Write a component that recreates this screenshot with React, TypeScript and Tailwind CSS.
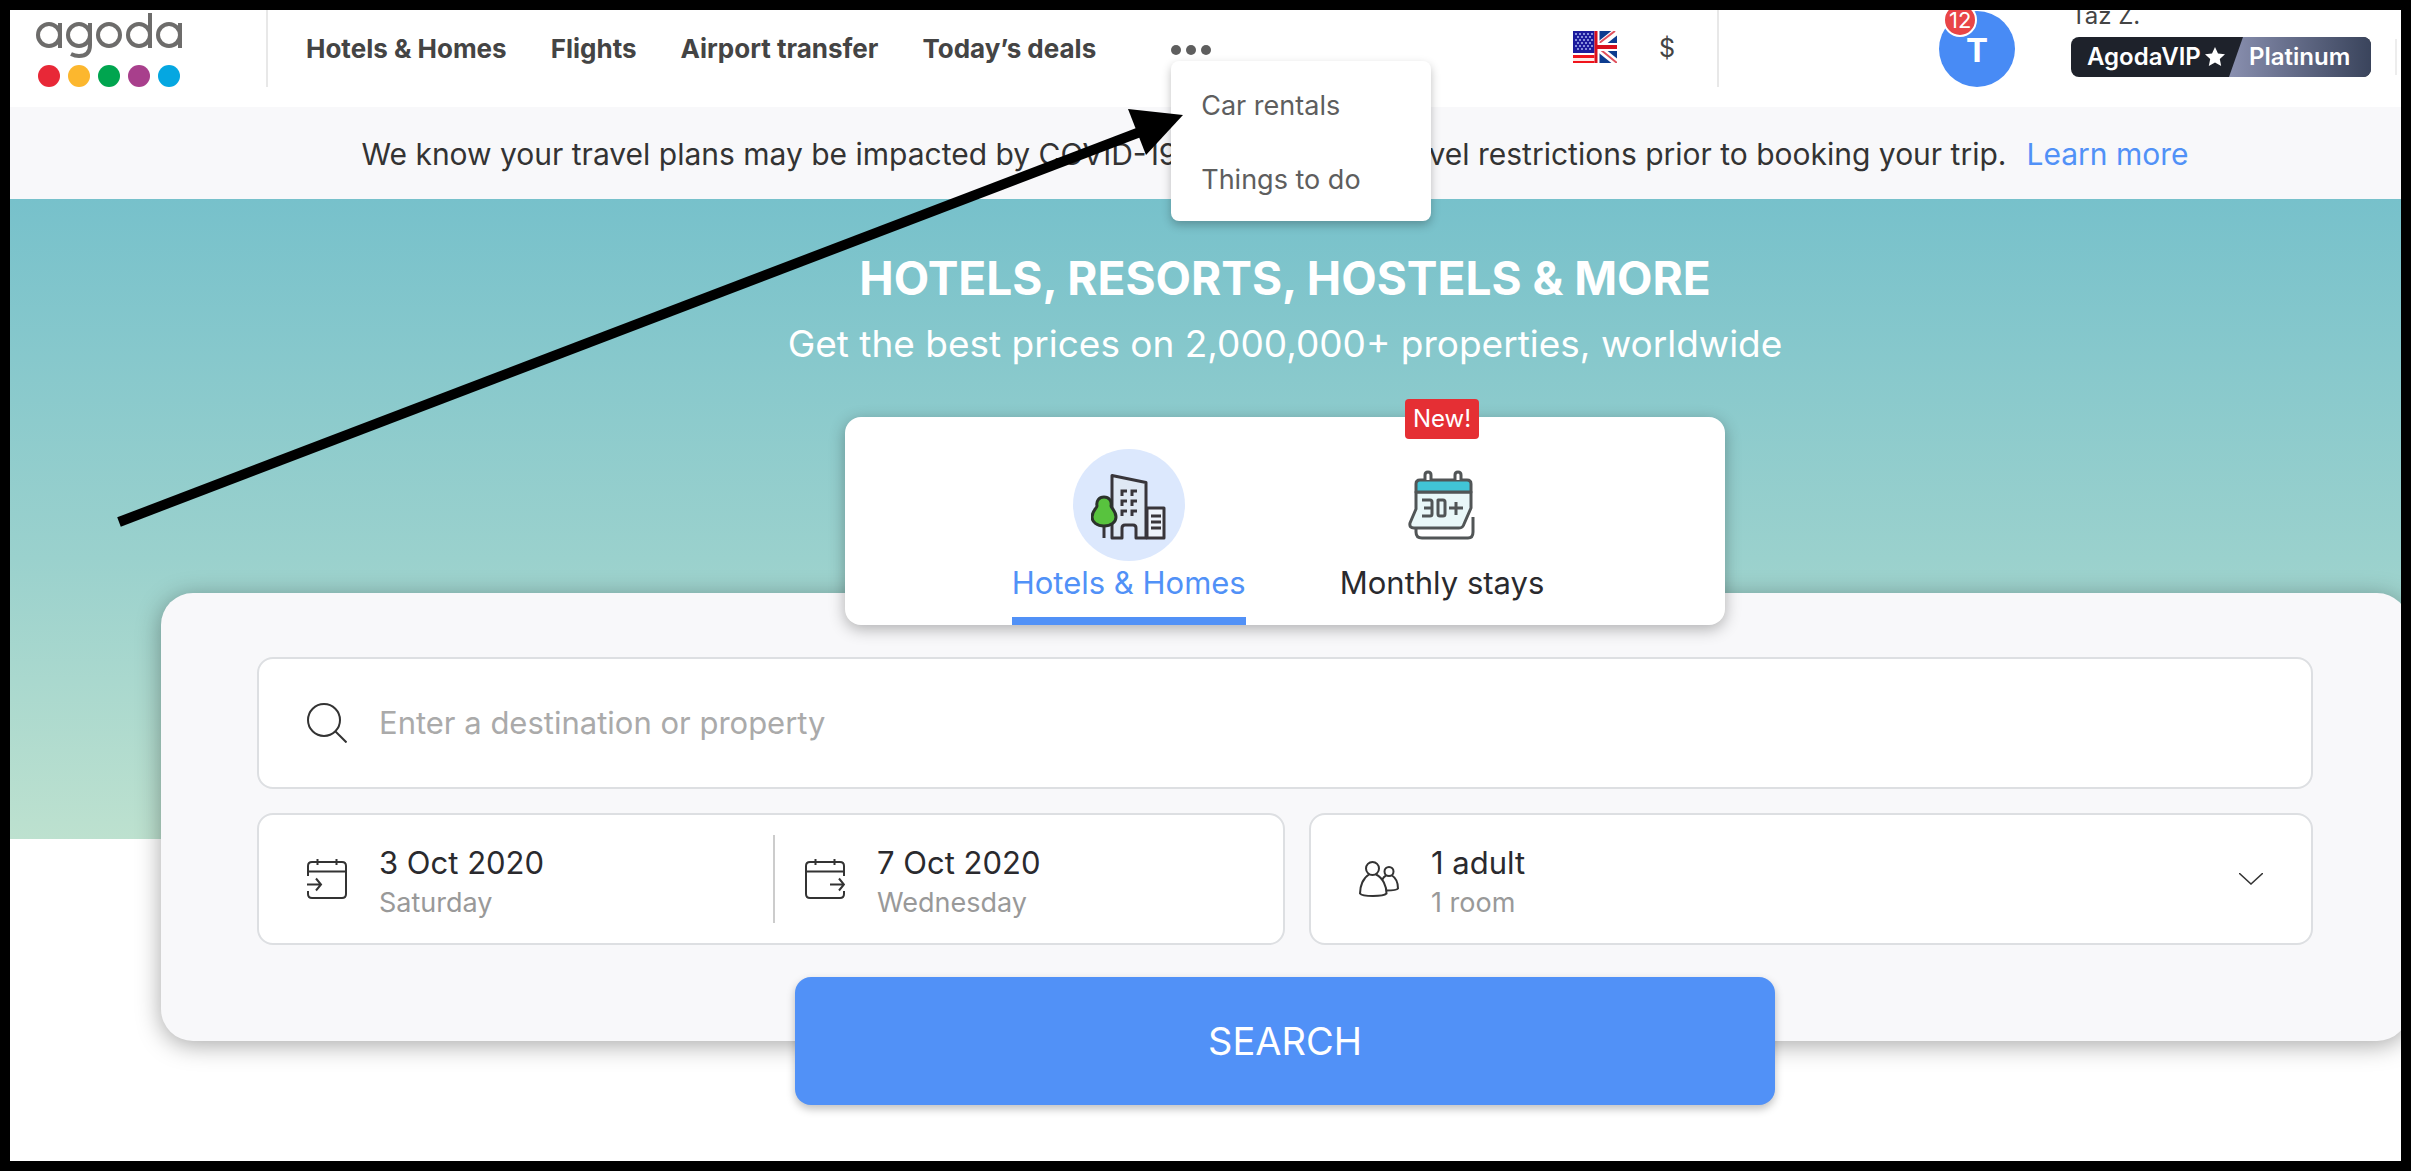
import type { ReactNode } from "react"

const navItems = ["Hotels & Homes", "Flights", "Airport transfer", "Today’s deals"]
const moreItems = ["Car rentals", "Things to do"]

function Logo() {
  return (
    <svg viewBox="0 0 148 76" className="h-[76px] w-[148px]" role="img" aria-label="agoda">
      <g fill="none" stroke="#6d6c6b" strokeWidth="4">
        <circle cx="13" cy="24" r="11" />
        <path d="M24 12v25" />
        <circle cx="43" cy="24" r="11" />
        <path d="M54 12v22c0 8-4 11-11 11-3 0-6-1-8-2" />
        <circle cx="73" cy="24" r="11" />
        <circle cx="103" cy="24" r="11" />
        <path d="M114 2v35" />
        <circle cx="133" cy="24" r="11" />
        <path d="M144 12v25" />
      </g>
      <circle cx="13" cy="65" r="11" fill="#e82837" />
      <circle cx="43" cy="65" r="11" fill="#fcb72e" />
      <circle cx="73" cy="65" r="11" fill="#00a54f" />
      <circle cx="103" cy="65" r="11" fill="#a83f8c" />
      <circle cx="133" cy="65" r="11" fill="#05a7e1" />
    </svg>
  )
}

function Flag() {
  return (
    <svg viewBox="0 0 44 32" className="h-8 w-11" aria-hidden="true">
      <rect width="44" height="32" fill="#fff" />
      <path d="M0 24h24v3H0zM0 30h24v2H0z" fill="#f0141c" />
      <path d="M0 27h24v3H0z" fill="#ffe9e4" />
      <rect width="22" height="22" fill="#1c1b9c" />
      <g stroke="#8790dc" strokeWidth="2" strokeDasharray="2 2">
        <path d="M2 3h18M4 6h16M2 9h18M4 12h16M2 15h18M4 18h16" />
      </g>
      <rect x="24" width="20" height="32" fill="#0d3c8f" />
      <path d="M24 16 44 0M24 16l20 16" stroke="#fff" strokeWidth="7" />
      <path d="M25 13 42 0M28 19l16 13" stroke="#e0505c" strokeWidth="2" />
      <path d="M24 0v32" stroke="#fff" strokeWidth="5" />
      <path d="M22 16h22" stroke="#fff" strokeWidth="8" />
      <path d="M23 0v32" stroke="#d8101d" strokeWidth="3" />
      <path d="M22 16h22" stroke="#d8101d" strokeWidth="4" />
    </svg>
  )
}

function CityIcon() {
  return (
    <svg viewBox="0 0 76 68" className="h-[68px] w-[76px]" fill="none" stroke="#38353a" strokeWidth="3" strokeLinejoin="round" aria-hidden="true">
      <path d="M56 35h17v30H56z" fill="#eef3fb" />
      <path d="M21 2.500 55 9.500V65H45V55q0-3-3-3H34q-3 0-3 3V65H21z" fill="#dfe8f4" />
      <path d="M60 43h10M60 49h10M60 55h10" />
      <path d="M31 23v-5h5M41 23v-5h5M31 33v-5h5M41 33v-5h5M31 43v-5h5M41 43v-5h5" strokeLinejoin="miter" />
      <path d="M13 50v15" />
      <path d="M13 24c-5 0-8 4-7 9 0 2-5 5-5 11 0 5 5 9 12 9s12-4 12-9c0-6-5-9-5-11 1-5-2-9-7-9z" fill="#58c33e" stroke="#2b322b" />
    </svg>
  )
}

function MonthIcon() {
  return (
    <svg viewBox="0 0 68 70" className="h-[70px] w-[68px]" fill="none" stroke="#515556" strokeWidth="3" strokeLinejoin="round" aria-hidden="true">
      <path d="M8 57v5q0 6 6 6h46q5 0 5-6V47" />
      <path d="M8 22v17L2 53q-1 5 4 5h45q4 0 5-4l7-16V22z" fill="#e9f7f8" />
      <path d="M8 22V14q0-4 4-4h47q4 0 4 4v8z" fill="#41c4d6" />
      <path d="M17 10V5q0-3 3-3t3 3v5M47 10V5q0-3 3-3t3 3v5" fill="#fff" />
      <path d="M14 30h8q2 0 2 2v12q0 2-2 2h-8M16 38h8M30 30h5q2 0 2 2v12q0 2-2 2h-3q-2 0-2-2zM41 38h14M48 32v13" />
    </svg>
  )
}

function SearchIcon() {
  return (
    <svg viewBox="0 0 40 40" className="size-10 shrink-0" fill="none" stroke="#333" strokeWidth="2" aria-hidden="true">
      <circle cx="17" cy="17" r="16" />
      <path d="m28.500 28.500 11 11" />
    </svg>
  )
}

function CheckInIcon() {
  return (
    <svg viewBox="0 0 40 40" className="size-10 shrink-0" fill="none" stroke="#333" strokeWidth="2" aria-hidden="true">
      <path d="M1 17V7q0-4 4-4h30q4 0 4 4v28q0 4-4 4H5q-4 0-4-4v-3M1 12.500h38M10.500 0v6M29.500 0v6M0 25.500h14M9 19.500l5 6-5 6" />
    </svg>
  )
}

function CheckOutIcon() {
  return (
    <svg viewBox="0 0 40 40" className="size-10 shrink-0" fill="none" stroke="#333" strokeWidth="2" aria-hidden="true">
      <path d="M39 17V7q0-4-4-4H5Q1 3 1 7v28q0 4 4 4h30q4 0 4-4v-3M1 12.500h38M10.500 0v6M29.500 0v6M25 25.500h14M34 19.500l5 6-5 6" />
    </svg>
  )
}

function GuestsIcon() {
  return (
    <svg viewBox="0 0 40 40" className="size-10 shrink-0" fill="none" stroke="#333" strokeWidth="2" aria-hidden="true">
      <circle cx="13.500" cy="9.500" r="6.500" />
      <path d="M10 15.500C4 19 1 27 1 34.500 2 36 7 37 14 37s12-1 13.500-2.500c0-7.500-3.500-15.500-10.500-19" />
      <circle cx="30" cy="12.500" r="4.500" />
      <path d="M27 16.500c-2 1-3 2.500-4 4.500M33 16.500c4 2.500 6 8 6 13-1 1.500-5 2-11.500 2" />
    </svg>
  )
}

function Field({ icon, title, note }: { icon: ReactNode; title: string; note: string }) {
  return (
    <span className="flex items-center gap-8">
      {icon}
      <span className="flex flex-col pt-2 text-left">
        <span className="text-[31px] leading-10 text-[#2a2a2e]">{title}</span>
        <span className="text-[27px] leading-10 text-[#999]">{note}</span>
      </span>
    </span>
  )
}

function Header() {
  return (
    <header className="relative z-20 flex h-[97px] items-start bg-white pl-[26px]">
      <a href="#" className="mt-px">
        <Logo />
      </a>
      <div className="ml-[82px] h-[77px] w-0.5 bg-[#e8e8e8]" />
      <nav className="ml-[38px] flex h-[76px] items-center gap-11 text-[26px] font-bold text-[#444]">
        {navItems.map((item) => (
          <a key={item} href="#">
            {item}
          </a>
        ))}
      </nav>
      <div className="relative ml-[75px]">
        <button type="button" aria-label="More" className="flex h-[51px] items-end gap-[5px] pb-1.5">
          <span className="size-2.5 rounded-full bg-[#5e5e5e]" />
          <span className="size-2.5 rounded-full bg-[#5e5e5e]" />
          <span className="size-2.5 rounded-full bg-[#5e5e5e]" />
        </button>
        <div className="absolute top-[51px] left-0 flex w-[260px] flex-col rounded-lg bg-white pt-2 pb-1 shadow-[0_4px_10px_rgba(0,0,0,0.25)]">
          {moreItems.map((item) => (
            <a key={item} href="#" className="px-[30px] py-[19px] text-[27px] leading-9 text-[#5e5e5e]">
              {item}
            </a>
          ))}
        </div>
      </div>

      <div className="ml-auto flex">
        <button type="button" aria-label="Language" className="mt-[21px] h-8">
          <Flag />
        </button>
        <button type="button" className="ml-[42px] h-[78px] text-[25px] text-[#444]">
          $
        </button>
        <div className="ml-[42px] h-[77px] w-0.5 bg-[#e8e8e8]" />
        <div className="relative mt-px ml-[220px] flex size-[76px] items-center justify-center rounded-full bg-[#488bf5] pt-1 text-[33px] font-bold text-white">
          T
          <span className="absolute -top-2 left-1 flex h-[34px] items-center rounded-full border-2 border-white bg-[#e94547] px-1 text-[22px] font-normal">
            12
          </span>
        </div>
        <div className="ml-14 flex flex-col">
          <span className="-mt-1.5 text-[24px] leading-6 text-[#444]">Taz Z.</span>
          <a href="#" className="mt-[9px] flex h-10 w-[300px] overflow-hidden rounded-lg bg-[#1e222b] text-[24px] leading-10 font-semibold text-white">
            <span className="flex flex-1 items-center gap-1 pl-4">
              AgodaVIP
              <svg viewBox="0 0 20 20" className="size-5" fill="#fff" aria-hidden="true">
                <path d="m10 0 3 6.500 7 .8-5.200 4.800 1.400 7-6.200-3.500L3.800 19.100l1.400-7L0 7.300l7-.8z" />
              </svg>
            </span>
            <span className="w-[142px] bg-linear-to-r from-[#8a90b0] to-[#3a445c] pl-5 [clip-path:polygon(14px_0,100%_0,100%_100%,0_100%)]">
              Platinum
            </span>
          </a>
        </div>
        <div className="mt-[29px] mr-1 ml-6 h-9 w-0.5 bg-[#ededed]" />
      </div>
    </header>
  )
}

function Tabs() {
  return (
    <div className="relative z-10 flex h-52 w-[880px] justify-center gap-[94px] rounded-2xl bg-white pt-8 pr-3.5 text-[31px] shadow-[0_4px_16px_rgba(0,0,0,0.3)]">
      <button type="button" className="flex flex-col items-center border-b-8 border-[#5191f7] text-[#5191f7]">
        <span className="flex size-28 items-center justify-center rounded-full bg-[#dce8fd] pt-1">
          <CityIcon />
        </span>
        <span className="leading-[44px]">Hotels &amp; Homes</span>
      </button>
      <button type="button" className="relative flex flex-col items-center border-b-8 border-transparent text-[#2a2a2e]">
        <span className="flex size-28 items-center justify-center">
          <MonthIcon />
        </span>
        <span className="leading-[44px]">Monthly stays</span>
        <span className="absolute -top-[50px] rounded bg-[#e52f34] px-2 text-[24px] leading-10 text-white">New!</span>
      </button>
    </div>
  )
}

function SearchPanel() {
  return (
    <form className="-mt-8 flex w-full flex-col items-center rounded-[32px] bg-[#f8f8fa] px-24 pt-16 shadow-[0_4px_24px_rgba(0,0,0,0.35)]">
      <label className="flex h-[132px] w-full items-center gap-8 rounded-2xl border-2 border-[#dddfe2] bg-white px-12">
        <SearchIcon />
        <input
          type="text"
          aria-label="Destination"
          placeholder="Enter a destination or property"
          className="flex-1 text-[31px] outline-none placeholder:text-[#aaa]"
        />
      </label>
      <div className="mt-6 flex h-[132px] w-full gap-6">
        <div className="flex w-1/2 items-center rounded-2xl border-2 border-[#dddfe2] bg-white pr-3 pl-12">
          <button type="button" className="flex-1">
            <Field icon={<CheckInIcon />} title="3 Oct 2020" note="Saturday" />
          </button>
          <div className="h-[88px] w-0.5 bg-[#ccc]" />
          <button type="button" className="flex-1 pl-[30px]">
            <Field icon={<CheckOutIcon />} title="7 Oct 2020" note="Wednesday" />
          </button>
        </div>
        <button type="button" className="flex flex-1 items-center justify-between rounded-2xl border-2 border-[#dddfe2] bg-white px-12">
          <Field icon={<GuestsIcon />} title="1 adult" note="1 room" />
          <svg viewBox="0 0 24 12" className="h-3 w-6" fill="none" stroke="#333" strokeWidth="1.500" aria-hidden="true">
            <path d="m0 0 12 11L24 0" />
          </svg>
        </button>
      </div>
      <button
        type="submit"
        className="mt-8 -mb-16 h-32 w-[980px] rounded-2xl bg-[#5191f7] text-[38px] text-white shadow-[0_4px_8px_rgba(0,0,0,0.25)]"
      >
        SEARCH
      </button>
    </form>
  )
}

export default function App() {
  return (
    <div className="relative min-h-screen overflow-hidden border-10 border-black bg-white font-['Inter',sans-serif]">
      <Header />
      <p className="flex h-[92px] items-center justify-center bg-[#f8f8fa] pt-0.5 pl-[139px] text-[30px] whitespace-pre text-[#333]">
        We know your travel plans may be impacted by COVID-19. Please check travel restrictions prior to booking your trip.
        <a href="#" className="ml-5 text-[#5191f7]">
          Learn more
        </a>
      </p>
      <main className="-mr-2 bg-linear-to-b from-[#77c1cb] via-[#9ad1cd] via-56% to-[#bde1cf] bg-size-[100%_640px] bg-no-repeat pl-[151px]">
        <div className="flex flex-col items-center pt-[49px]">
          <h1 className="text-[46px] leading-[60px] font-bold text-white">HOTELS, RESORTS, HOSTELS &amp; MORE</h1>
          <p className="mt-1.5 mb-[43px] text-[37px] leading-[60px] text-white">Get the best prices on 2,000,000+ properties, worldwide</p>
          <Tabs />
          <SearchPanel />
        </div>
      </main>

      {/* pointer to the overflow menu */}
      <svg viewBox="0 0 1200 540" className="pointer-events-none absolute top-0 left-0 z-30 h-[540px] w-[1200px]" aria-hidden="true">
        <path d="M109 512 1130 122" stroke="#000" strokeWidth="10" />
        <path d="m1118 99 55 6-37 40z" />
      </svg>
    </div>
  )
}
